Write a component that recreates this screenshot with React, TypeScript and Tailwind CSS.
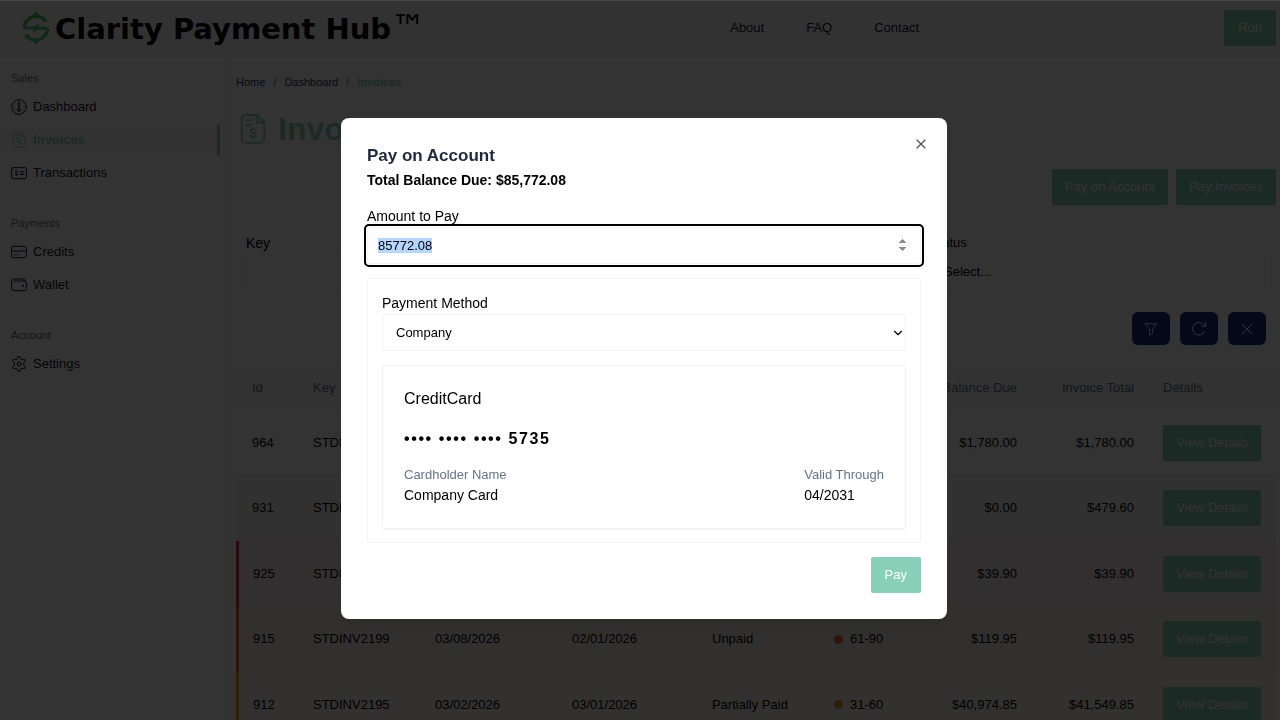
import { useEffect, useRef, useState } from 'react';
import type { ReactNode } from 'react';
import { ChevronDown, X } from 'lucide-react';

const invoices = [
  { id: '964', key: 'STDINV', balance: '$1,780.00', total: '$1,780.00', row: 'bg-white', edge: 'pl-4' },
  { id: '931', key: 'STDINV', balance: '$0.00', total: '$479.60', row: 'bg-[#f6f6f6]', edge: 'pl-4' },
  { id: '925', key: 'STDINV', balance: '$39.90', total: '$39.90', row: 'bg-[#fbecef]', edge: 'pl-[14px] border-l-[3px] border-l-[#dc2f3c]' },
  { id: '915', key: 'STDINV2199', created: '03/08/2026', due: '02/01/2026', status: 'Unpaid', aging: '61-90', dot: 'bg-[#ee6a2c]', balance: '$119.95', total: '$119.95', row: 'bg-[#f5f0ea]', edge: 'pl-[14px] border-l-[3px] border-l-[#e8641b]' },
  { id: '912', key: 'STDINV2195', created: '03/02/2026', due: '03/01/2026', status: 'Partially Paid', aging: '31-60', dot: 'bg-[#dba52c]', balance: '$40,974.85', total: '$41,549.85', row: 'bg-[#f8f5eb]', edge: 'pl-[14px] border-l-[3px] border-l-[#d9b01c]' },
];

function Icon({ children, className = 'size-4' }: { children: ReactNode; className?: string }) {
  return (
    <svg viewBox="0 0 24 24" fill="none" stroke="currentColor" strokeWidth="1.5" strokeLinecap="round" strokeLinejoin="round" className={className}>
      {children}
    </svg>
  );
}

function DashboardIcon() {
  return (
    <Icon>
      <circle cx="12" cy="12" r="11" />
      <path d="M12 5v9" strokeWidth="2" />
      <circle cx="12" cy="16.5" r="2.2" />
      <path d="M7.2 6.8l.3.4M16.8 6.8l-.3.4M4.500 12h.6M18.900 12h.6M6.500 17.200l.3-.3M17.500 17.200l-.3-.3" />
    </Icon>
  );
}

function InvoiceIcon({ className = 'size-4' }: { className?: string }) {
  return (
    <Icon className={className}>
      <path d="M6 .8h9l6 6V20a3 3 0 0 1-3 3H6a3 3 0 0 1-3-3V3.800a3 3 0 0 1 3-3z" />
      <path d="M15 1v5.800h6M6.500 5h4.500M6.500 8.500h4.500" />
      <path d="M14 12.800c-.4-.6-1.100-.9-2-.9-1.200 0-2 .6-2 1.500 0 2.100 4.200 1 4.200 3.200 0 1-.9 1.600-2.200 1.600-1 0-1.800-.4-2.200-1M12 10.700v1.200M12 18.200v1.200" />
    </Icon>
  );
}

function TransactionsIcon() {
  return (
    <Icon>
      <rect x="1" y="4" width="22" height="16.5" rx="2" />
      <path d="M9.800 9.800c-.4-.5-1-.8-1.800-.8-1.100 0-1.800.6-1.800 1.400 0 1.900 3.700.9 3.700 2.900 0 .9-.8 1.500-1.900 1.500-.9 0-1.600-.3-2-.9M8 7.800V9M8 14.800V16" />
      <path d="M14 10.200h4.500M14 14.200h4.500" strokeWidth="1.800" />
    </Icon>
  );
}

function CreditsIcon() {
  return (
    <Icon>
      <rect x="1" y="3.5" width="22" height="17" rx="2.5" />
      <path d="M1 10.500h22" />
      <path d="M5.500 16h.8M10 16h.8" strokeWidth="1.800" />
    </Icon>
  );
}

function WalletIcon() {
  return (
    <Icon>
      <path d="M21 6V5a2 2 0 0 0-2-2H3.500A2.500 2.500 0 0 0 1 5.500v12A3 3 0 0 0 4 20.500h16a3 3 0 0 0 3-3V9a3 3 0 0 0-3-3H5" />
      <circle cx="18" cy="13.3" r=".8" fill="currentColor" />
    </Icon>
  );
}

function SettingsIcon() {
  return (
    <Icon>
      <path d="M10.300 1h3.400l.8 3.400 2.100 1.200 3.400-1 1.700 3-2.600 2.500v3.800l2.600 2.500-1.700 3-3.400-1-2.100 1.200-.8 3.400h-3.400l-.8-3.400-2.100-1.200-3.400 1-1.700-3 2.600-2.500v-3.800L2.300 7.600l1.700-3 3.400 1 2.100-1.200z" />
      <circle cx="12" cy="12" r="3" />
    </Icon>
  );
}

function Logo() {
  return (
    <svg viewBox="0 0 28 36" className="h-9 w-7 shrink-0">
      <defs>
        <linearGradient id="mark" gradientUnits="userSpaceOnUse" x1="0" y1="0" x2="6" y2="36">
          <stop offset="0" stopColor="#4fc04a" />
          <stop offset="1" stopColor="#4fc79c" />
        </linearGradient>
      </defs>
      <path d="M24.200 11.500A12 12 0 0 0 2.300 17.500M3.600 24.500A12 12 0 0 0 25.700 19" fill="none" stroke="url(#mark)" strokeWidth="3.600" />
      <path d="M11 5.500L14 .8l3 4.700zM11 30.500L14 35.200l3-4.700z" fill="url(#mark)" />
      <path d="M.8 19.600l3.400-3.200h8.300l5-2.900-1 3.300h10.700l-3.400 3.200h-8.600l-4.900 3 1-3.400z" fill="url(#mark)" />
    </svg>
  );
}

function NavItem({ icon, label, active }: { icon: ReactNode; label: string; active?: boolean }) {
  return (
    <a
      href="#"
      className={
        active
          ? 'ml-1 mr-2 flex h-[30px] items-center gap-[6px] border-r-[3px] border-[#89d0b9] bg-[#fbfbfb] pl-[7px] font-bold text-[#89d0b9]'
          : 'ml-1 mr-2 flex h-[30px] items-center gap-[6px] pl-[7px] text-gray-900'
      }
    >
      {icon}
      {label}
    </a>
  );
}

function NavGroup({ title, children }: { title: string; children: ReactNode }) {
  return (
    <section>
      <h2 className="pl-[11px] text-[11px] leading-4 text-gray-500">{title}</h2>
      <div className="mt-[6px] flex flex-col gap-[3px]">{children}</div>
    </section>
  );
}

function Sidebar() {
  return (
    <aside className="flex w-[229px] shrink-0 flex-col gap-[27px] border-r border-gray-100 pt-[13px]">
      <NavGroup title="Sales">
        <NavItem icon={<DashboardIcon />} label="Dashboard" />
        <NavItem icon={<InvoiceIcon />} label="Invoices" active />
        <NavItem icon={<TransactionsIcon />} label="Transactions" />
      </NavGroup>
      <NavGroup title="Payments">
        <NavItem icon={<CreditsIcon />} label="Credits" />
        <NavItem icon={<WalletIcon />} label="Wallet" />
      </NavGroup>
      <NavGroup title="Account">
        <NavItem icon={<SettingsIcon />} label="Settings" />
      </NavGroup>
    </aside>
  );
}

function InvoiceTable() {
  return (
    <table className="mt-5 w-full table-fixed border-separate border-spacing-0 text-left">
      <colgroup>
        <col className="w-[62px]" />
        <col className="w-[122px]" />
        <col className="w-[137px]" />
        <col className="w-[140px]" />
        <col className="w-[122px]" />
        <col className="w-[112px]" />
        <col className="w-[101px]" />
        <col className="w-[117px]" />
        <col className="w-[127px]" />
      </colgroup>
      <thead>
        <tr className="h-[45px] bg-[#f7f7f8] text-slate-500">
          <th className="pl-4 font-normal">Id</th>
          <th className="pl-[15px] font-normal">Key</th>
          <th colSpan={4} />
          <th className="whitespace-nowrap pr-[15px] text-right font-normal">Balance Due</th>
          <th className="pr-[15px] text-right font-normal">Invoice Total</th>
          <th className="pl-[14px] font-normal">Details</th>
        </tr>
      </thead>
      <tbody>
        {invoices.map(inv => (
          <tr key={inv.id} className={`odd:h-[65px] even:h-[66px] ${inv.row}`}>
            <td className={inv.edge}>{inv.id}</td>
            <td className="pl-[15px]">{inv.key}</td>
            <td className="pl-[15px]">{inv.created}</td>
            <td className="pl-[15px]">{inv.due}</td>
            <td className="pl-[15px]">{inv.status}</td>
            <td className="pl-[15px]">
              {inv.aging && (
                <span className="flex items-center gap-[7px]">
                  <span className={`size-[9px] rounded-full ${inv.dot}`} />
                  {inv.aging}
                </span>
              )}
            </td>
            <td className="pr-[15px] text-right">{inv.balance}</td>
            <td className="pr-[15px] text-right">{inv.total}</td>
            <td className="pl-[14px] pr-[15px]">
              <button className="h-9 w-full rounded-xs bg-[#89d0b9] text-white">View Details</button>
            </td>
          </tr>
        ))}
      </tbody>
    </table>
  );
}

function PayDialog() {
  const [amount, setAmount] = useState('85772.08');
  const amountRef = useRef<HTMLInputElement>(null);

  useEffect(() => {
    amountRef.current?.focus();
    amountRef.current?.select();
  }, []);

  return (
    <div className="fixed inset-0 flex items-center justify-center border-t border-[#474747] bg-black/80 pl-2 pt-4">
      <div role="dialog" aria-labelledby="pay-title" className="relative w-[606px] max-w-full rounded-lg bg-white px-[26px] pb-[26px] pt-[26px] text-[14px] text-black shadow-lg">
        <button aria-label="Close" className="absolute right-[18px] top-[18px] text-gray-600">
          <X className="size-4" strokeWidth={1.75} />
        </button>
        <h2 id="pay-title" className="text-[17px] font-bold leading-6 text-slate-800">Pay on Account</h2>
        <p className="font-bold leading-6">Total Balance Due: $85,772.08</p>

        <label htmlFor="amount" className="mt-[13px] block leading-[22px]">Amount to Pay</label>
        <input
          id="amount"
          ref={amountRef}
          type="number"
          value={amount}
          onChange={e => setAmount(e.target.value)}
          className="block h-[37px] w-full rounded-xs border border-gray-100 px-[10px] text-[13px] outline-2 outline-offset-1 outline-black selection:bg-[#b3d7ff] selection:text-black [&::-webkit-inner-spin-button]:opacity-100"
        />

        <div className="mt-[14px] rounded-xs border border-gray-100 px-[14px] py-[13px]">
          <label htmlFor="method" className="block leading-[22px]">Payment Method</label>
          <div className="relative">
            <select id="method" className="block h-[37px] w-full appearance-none rounded-xs border border-gray-100 bg-white px-[13px] text-[13px]">
              <option>Company</option>
            </select>
            <ChevronDown className="pointer-events-none absolute right-[1px] top-[12px] size-[14px]" />
          </div>

          <div className="mt-[14px] rounded-xs border border-gray-100 px-[21px] pb-[23px] pt-[22px] shadow-xs">
            <p className="text-[16px] leading-[22px]">CreditCard</p>
            <p className="mt-[18px] text-[16px] font-bold leading-[22px] tracking-widest">•••• •••• •••• 5735</p>
            <div className="mt-[15px] flex justify-between leading-5">
              <div>
                <p className="text-[13px] text-slate-500">Cardholder Name</p>
                <p>Company Card</p>
              </div>
              <div>
                <p className="text-[13px] text-slate-500">Valid Through</p>
                <p>04/2031</p>
              </div>
            </div>
          </div>
        </div>

        <div className="mt-[14px] flex justify-end">
          <button className="h-9 rounded-xs bg-[#89d0b9] px-[14px] text-[13px] text-white">Pay</button>
        </div>
      </div>
    </div>
  );
}

export default function App() {
  return (
    <div className="h-screen overflow-hidden bg-white font-['Liberation_Sans',Arial,sans-serif] text-[13px] text-black">
      <header className="flex h-[57px] items-center justify-between border-b border-gray-100 bg-[#fafafa] pl-[22px] pr-1">
        <a href="#" className="flex items-center gap-[5px] font-['DejaVu_Sans',sans-serif] text-[29px] font-bold">
          <Logo />
          <span className="whitespace-nowrap leading-9">
            Clarity Payment Hub<span className="text-[34px] font-normal">™</span>
          </span>
        </a>
        <nav className="flex gap-[42px] text-slate-900">
          <a href="#">About</a>
          <a href="#">FAQ</a>
          <a href="#">Contact</a>
        </nav>
        <button className="h-9 rounded-xs bg-[#89d0b9] px-[14px] text-white">Ron</button>
      </header>

      <div className="flex">
        <Sidebar />
        <main className="min-w-0 flex-1 pl-[7px] pr-1 pt-[17px]">
          <nav className="flex gap-2 text-[11px] leading-4 text-[#1c3282]">
            <a href="#">Home</a>
            <span className="text-gray-500">/</span>
            <a href="#">Dashboard</a>
            <span className="text-gray-500">/</span>
            <a href="#" className="font-bold text-[#89d0b9]">Invoices</a>
          </nav>

          <h1 className="mt-[19px] flex items-center gap-[10px] pl-[2px] text-[32px] font-bold leading-10 text-[#89d0b9]">
            <InvoiceIcon className="size-[30px]" />
            Invoices
          </h1>

          <div className="mt-5 flex justify-end gap-2">
            <button className="h-9 rounded-xs bg-[#89d0b9] px-[13px] text-white">Pay on Account</button>
            <button className="h-9 rounded-xs bg-[#89d0b9] px-[13px] text-white">Pay Invoices</button>
          </div>

          <div className="mt-[27px] grid grid-cols-3 gap-[7px] pl-[10px] pr-[11px]">
            <div>
              <label htmlFor="key" className="block text-[14px] leading-[22px]">Key</label>
              <input id="key" className="block h-9 w-full rounded-xs border border-gray-100 px-[14px]" />
            </div>
            <div className="col-start-3">
              <label htmlFor="status" className="block leading-[22px]">Status</label>
              <select id="status" className="block h-9 w-full appearance-none rounded-xs border border-gray-100 bg-white px-[13px]">
                <option>Select...</option>
              </select>
            </div>
          </div>

          <div className="mt-[22px] flex justify-end gap-[10px] pr-[10px] text-white">
            <button aria-label="Filter" className="flex h-[33px] w-[38px] items-center justify-center rounded-md bg-[#182f80]">
              <Icon className="size-[14px]">
                <path d="M2 3h20l-7.500 9v8L9.500 22.500V12z" />
              </Icon>
            </button>
            <button aria-label="Refresh" className="flex h-[33px] w-[38px] items-center justify-center rounded-md bg-[#182f80]">
              <Icon>
                <path d="M20.500 15.500a9.500 9.500 0 1 1-1.200-9.500l2.200 2M22 2.500V8h-5.500" />
              </Icon>
            </button>
            <button aria-label="Clear" className="flex h-[33px] w-[38px] items-center justify-center rounded-md bg-[#182f80]">
              <Icon>
                <path d="M4.500 4.500l15 15M19.500 4.500l-15 15" />
              </Icon>
            </button>
          </div>

          <InvoiceTable />
        </main>
      </div>

      <PayDialog />
    </div>
  );
}
